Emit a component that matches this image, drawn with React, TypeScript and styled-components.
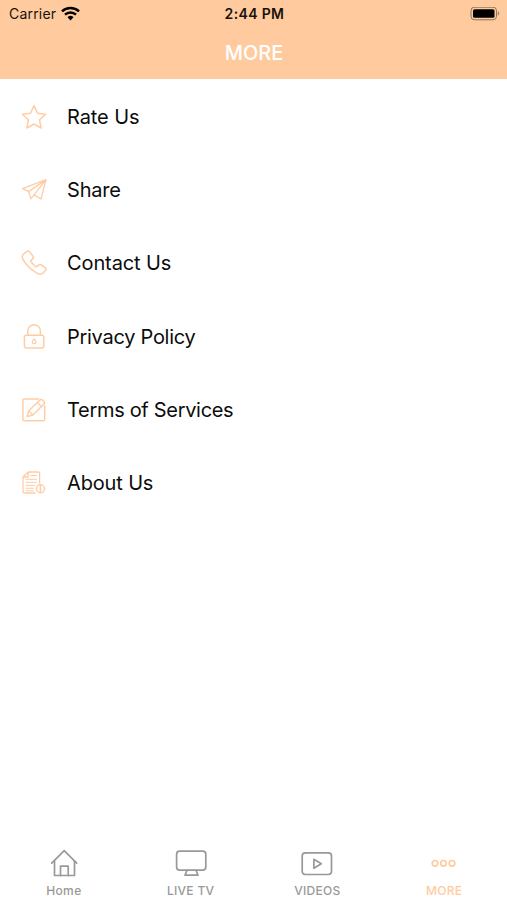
import React from 'react';
import styled, { createGlobalStyle } from 'styled-components';

const GlobalStyle = createGlobalStyle`
  * {
    box-sizing: border-box;
  }

  body {
    margin: 0;
    background: #fff;
    font-family: Inter, "Liberation Sans", sans-serif;
  }
`;

const Screen = styled.div`
  display: flex;
  flex-direction: column;
  width: 100%;
  height: 100vh;
  overflow: hidden;
  background: #fff;
`;

const Header = styled.header`
  flex: none;
  height: 79px;
  background: #ffcb9e;
`;

const StatusBar = styled.div`
  display: grid;
  grid-template-columns: 1fr auto 1fr;
  align-items: center;
  height: 27px;
  padding: 0 7px 0 9px;
  color: #18120c;
`;

const Carrier = styled.div`
  display: flex;
  align-items: center;
  gap: 5px;
  font-size: 14px;
  letter-spacing: 0.2px;
`;

const Clock = styled.div`
  font-size: 14px;
  font-weight: 600;
  letter-spacing: 0.35px;
`;

const BatterySlot = styled.div`
  display: flex;
  justify-content: flex-end;
`;

const Title = styled.h1`
  margin: 0;
  height: 52px;
  line-height: 52px;
  padding-left: 1px;
  text-align: center;
  font-size: 20px;
  font-weight: 500;
  color: #fff;
`;

const Menu = styled.nav`
  flex: 1;
  padding-top: 1px;
`;

const MenuRow = styled.a`
  display: flex;
  align-items: center;
  gap: 19px;
  height: 73.3px;
  padding-left: 20px;
  color: #0c0c0c;
`;

const MenuLabel = styled.span<{ $spacing: number }>`
  font-size: 20px;
  line-height: 28px;
  letter-spacing: ${({ $spacing }) => $spacing}px;
`;

const MenuIcon = styled.svg`
  flex: none;
  width: 28px;
  height: 28px;
  fill: none;
  stroke: #ffcda4;
  stroke-width: 1.5;
  stroke-linejoin: round;
  stroke-linecap: round;
`;

const TabBar = styled.footer`
  flex: none;
  display: grid;
  grid-template-columns: repeat(4, 1fr);
  height: 52px;
`;

const Tab = styled.a<{ $active?: boolean }>`
  display: flex;
  flex-direction: column;
  align-items: center;
  padding-left: 1px;
  color: ${({ $active }) => ($active ? '#ffcb9e' : '#999')};
`;

const TabIcon = styled.svg`
  width: 32px;
  height: 30px;
  fill: none;
  stroke: currentColor;
  stroke-width: 1.7;
  stroke-linejoin: round;
  stroke-linecap: round;
`;

const TabLabel = styled.span<{ $spacing: number }>`
  margin-top: 5px;
  font-size: 12px;
  font-weight: 500;
  line-height: 16px;
  letter-spacing: ${({ $spacing }) => $spacing}px;
`;

const menuItems = [
  {
    label: 'Rate Us',
    spacing: -0.1,
    icon: <path d="M14 2.6l3.5 7.6 8.1 1-6 5.6 1.5 8.2-7.1-4-7.1 4 1.5-8.2-6-5.6 8.1-1z" />,
  },
  {
    label: 'Share',
    spacing: -0.2,
    icon: (
      <>
        <path d="M26 3.6L2.5 12.6l6.2 3L26 3.6l-5 19.4-7-4.1L26 3.6" strokeWidth="1.3" />
        <path d="M8.7 15.6l2.2 7.2 3.1-3.9" strokeWidth="1.3" />
      </>
    ),
  },
  {
    label: 'Contact Us',
    spacing: -0.1,
    icon: (
      <path d="M3.5 5.2l3.2-2.6c1-.8 2.3-.6 3.1.4l3 4c.8 1 .6 2.2-.3 3.1l-1.4 1.3c-.5.5-.5 1.1 0 1.7l4 4.1c.6.6 1.3.6 1.9.1l1.6-1.2c.9-.7 2-.7 3 0l3.5 2.5c1 .8 1.1 2.1.3 3l-2.5 2.6c-1.3 1.2-3.5 1.1-5.5.1C11.5 21 6.2 16 3.1 10.6 2 8.6 2.1 6.4 3.5 5.2z" />
    ),
  },
  {
    label: 'Privacy Policy',
    spacing: -0.28,
    icon: (
      <>
        <rect x="4.4" y="12.3" width="19.4" height="12.8" rx="2" />
        <path d="M7.8 12.3V8a6.3 6.300 0 0 1 12.600 0v4.300" />
        <path d="M14.100 15.800l1.900 2.900a1.900 1.900 0 1 1-3.800 0z" strokeWidth="1.2" />
      </>
    ),
  },
  {
    label: 'Terms of Services',
    spacing: -0.31,
    icon: (
      <>
        <path d="M18.600 2.900H4.200a1.300 1.300 0 0 0-1.300 1.300v19.200a1.300 1.300 0 0 0 1.300 1.300h19.200a1.300 1.300 0 0 0 1.300-1.300V10" />
        <path d="M7.200 20.500l1.500-5.700L19.700 4.200c.9-.9 2.200-.9 3.100 0l1 1c.9.9.9 2.200 0 3.100L12.900 19z" strokeWidth="1.400" />
        <path d="M17.400 6.500l4.100 4.100M8.700 14.800l4.200 4.200" strokeWidth="1.200" />
      </>
    ),
  },
  {
    label: 'About Us',
    spacing: -0.15,
    icon: (
      <>
        <path d="M14.800 24H4.200a1.200 1.200 0 0 1-1.200-1.200V8l5.200-5h10.200a1.200 1.200 0 0 1 1.200 1.200v10M3 8h5.200V3" strokeWidth="1.300" />
        <path d="M10.500 6.500h6M6 10.300h10.500M6 13.300h10.500M6 16.300h8.500M6 19.300h7.500M6 21.800h7.500" strokeWidth="1" />
        <circle cx="20.500" cy="19.700" r="4" strokeWidth="1.400" />
        <path d="M20.500 18.600v3.400M20.500 17v.1" strokeWidth="1.700" />
      </>
    ),
  },
];

const tabs = [
  {
    label: 'Home',
    spacing: 0.4,
    icon: (
      <>
        <path d="M3.700 15.200L16.200 2.700l12.500 12.500" />
        <path d="M6.500 12.800v14.700h20V12.800" />
        <path d="M12.500 27.500v-9.300h7.700v9.300" />
      </>
    ),
  },
  {
    label: 'LIVE TV',
    spacing: 0.3,
    icon: (
      <>
        <rect x="1.600" y="3.200" width="29.200" height="18.900" rx="3.200" />
        <path d="M12 22.300l-2 4.900h13l-2-4.900" />
      </>
    ),
  },
  {
    label: 'VIDEOS',
    spacing: 0.3,
    icon: (
      <>
        <rect x="1.200" y="4.900" width="29.300" height="21.600" rx="3.200" />
        <path d="M12.900 11.300v8.900l7.400-4.450z" />
      </>
    ),
  },
  {
    label: 'MORE',
    spacing: 0.3,
    active: true,
    icon: (
      <>
        <circle cx="7" cy="15.300" r="2.800" />
        <circle cx="15.500" cy="15.300" r="2.800" />
        <circle cx="24" cy="15.300" r="2.800" />
      </>
    ),
  },
];

const WifiIcon = () => (
  <svg width="19" height="15" viewBox="0 0 19 15" fill="none" stroke="#000" strokeWidth="2.500">
    <path d="M1 5.300a12.300 12.300 0 0 1 17 0" />
    <path d="M4 8.600a8 8 0 0 1 11 0" />
    <path d="M9.500 14.400l-3-3.200a4.300 4.300 0 0 1 6 0z" fill="#000" stroke="none" />
  </svg>
);

const BatteryIcon = () => (
  <svg width="30" height="14" viewBox="0 0 30 14">
    <rect x="1" y=".2" width="25.500" height="12.600" rx="3.500" fill="none" stroke="#8c7258" strokeWidth="1" />
    <rect x="3" y="2.200" width="21.500" height="8.600" rx="1.600" fill="#000" />
    <path d="M27.800 4.300c1.900.7 1.900 3.700 0 4.400z" fill="#a5825f" />
  </svg>
);

const App = () => {
  return (
    <Screen>
      <GlobalStyle />
      <Header>
        <StatusBar>
          <Carrier>
            Carrier
            <WifiIcon />
          </Carrier>
          <Clock>2:44 PM</Clock>
          <BatterySlot>
            <BatteryIcon />
          </BatterySlot>
        </StatusBar>
        <Title>MORE</Title>
      </Header>

      <Menu>
        {menuItems.map((item) => (
          <MenuRow key={item.label}>
            <MenuIcon viewBox="0 0 28 28">{item.icon}</MenuIcon>
            <MenuLabel $spacing={item.spacing}>{item.label}</MenuLabel>
          </MenuRow>
        ))}
      </Menu>

      <TabBar>
        {tabs.map((tab) => (
          <Tab key={tab.label} $active={tab.active}>
            <TabIcon viewBox="0 0 32 30">{tab.icon}</TabIcon>
            <TabLabel $spacing={tab.spacing}>{tab.label}</TabLabel>
          </Tab>
        ))}
      </TabBar>
    </Screen>
  );
};

export default App;
